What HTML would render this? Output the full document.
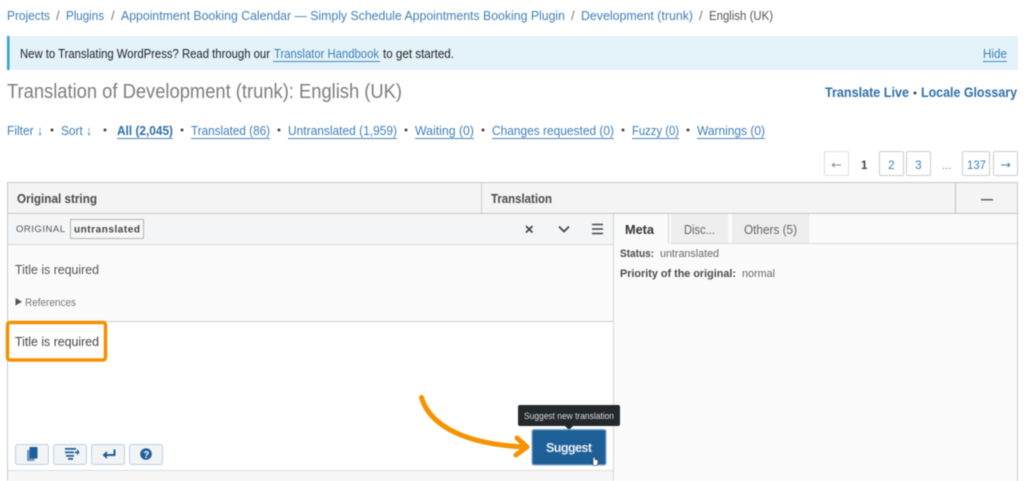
<!DOCTYPE html>
<html><head><meta charset="utf-8"><style>
html,body{margin:0;padding:0;background:#fff;width:1024px;height:481px;overflow:hidden}
svg{display:block;position:absolute;left:0;top:0;filter:blur(.4px)}
text{font-family:"Liberation Sans",sans-serif;font-size:13px;fill:#3c3c3c}
.l{fill:#3f7fb8}
.u{stroke:#4a86bb;stroke-width:1}
.b{font-weight:bold}
.btn{fill:#fff;stroke:#dfe1e3;stroke-width:1}
.btn2{fill:#fff;stroke:#c9cdd1;stroke-width:1}
.t{fill:#f1f3f5;stroke:#bcd3e6;stroke-width:1}
</style></head><body>
<svg width="1024" height="481" viewBox="0 0 1024 481" xmlns="http://www.w3.org/2000/svg">
<rect width="1024" height="481" fill="#fff"/>
<text class="l" x="7" y="20" textLength="43" lengthAdjust="spacingAndGlyphs">Projects</text>
<text x="56" y="20" style="fill:#777">/</text>
<text class="l" x="66" y="20" textLength="38" lengthAdjust="spacingAndGlyphs">Plugins</text>
<text x="111" y="20" style="fill:#777">/</text>
<text class="l" x="121" y="20" textLength="444" lengthAdjust="spacingAndGlyphs">Appointment Booking Calendar — Simply Schedule Appointments Booking Plugin</text>
<text x="571" y="20" style="fill:#777">/</text>
<text class="l" x="581" y="20" textLength="112" lengthAdjust="spacingAndGlyphs">Development (trunk)</text>
<text x="699" y="20" style="fill:#777">/</text>
<text x="709" y="20" textLength="64" lengthAdjust="spacingAndGlyphs" style="fill:#555">English (UK)</text>

<rect x="7" y="36" width="1011" height="34" fill="#e3f3f9"/>
<rect x="7" y="36" width="2.5" height="34" fill="#2ea2cc"/>
<text x="20" y="58" textLength="250" lengthAdjust="spacingAndGlyphs" style="fill:#222">New to Translating WordPress? Read through our</text>
<text class="l" x="274" y="58" textLength="105" lengthAdjust="spacingAndGlyphs">Translator Handbook</text>
<line class="u" x1="273" x2="380" y1="61.5" y2="61.5"/>
<text x="383" y="58" textLength="71" lengthAdjust="spacingAndGlyphs" style="fill:#222">to get started.</text>
<text class="l" x="983" y="58" textLength="24" lengthAdjust="spacingAndGlyphs">Hide</text>
<line class="u" x1="983" x2="1007" y1="61.5" y2="61.5"/>

<text x="7" y="98" textLength="395" lengthAdjust="spacingAndGlyphs" style="font-size:20.5px;fill:#7d7d7d">Translation of Development (trunk): English (UK)</text>
<text class="b" x="825" y="97" textLength="84" lengthAdjust="spacingAndGlyphs" style="font-size:14px;fill:#2f6fa8">Translate Live</text>
<circle cx="915" cy="93" r="1.5" fill="#444"/>
<text class="b" x="921" y="97" textLength="96" lengthAdjust="spacingAndGlyphs" style="font-size:14px;fill:#2f6fa8">Locale Glossary</text>

<text class="l" x="7" y="135" textLength="36" lengthAdjust="spacingAndGlyphs">Filter ↓</text>
<text class="l" x="61" y="135" textLength="31" lengthAdjust="spacingAndGlyphs">Sort ↓</text>
<text class="b" x="117" y="135" textLength="56" lengthAdjust="spacingAndGlyphs" style="fill:#2f6fa8">All (2,045)</text>
<line class="u" x1="117" x2="173" y1="138.500" y2="138.500"/>
<text class="l" x="191" y="135" textLength="79" lengthAdjust="spacingAndGlyphs">Translated (86)</text>
<line class="u" x1="191" x2="270" y1="138.500" y2="138.500"/>
<text class="l" x="288" y="135" textLength="109" lengthAdjust="spacingAndGlyphs">Untranslated (1,959)</text>
<line class="u" x1="288" x2="397" y1="138.500" y2="138.500"/>
<text class="l" x="415" y="135" textLength="59" lengthAdjust="spacingAndGlyphs">Waiting (0)</text>
<line class="u" x1="415" x2="474" y1="138.500" y2="138.500"/>
<text class="l" x="492" y="135" textLength="122" lengthAdjust="spacingAndGlyphs">Changes requested (0)</text>
<line class="u" x1="492" x2="614" y1="138.500" y2="138.500"/>
<text class="l" x="632" y="135" textLength="47" lengthAdjust="spacingAndGlyphs">Fuzzy (0)</text>
<line class="u" x1="632" x2="679" y1="138.500" y2="138.500"/>
<text class="l" x="697" y="135" textLength="68" lengthAdjust="spacingAndGlyphs">Warnings (0)</text>
<line class="u" x1="697" x2="765" y1="138.500" y2="138.500"/>
<g fill="#444"><circle cx="52" cy="130" r="1.500"/><circle cx="105" cy="130" r="1.500"/><circle cx="182" cy="130" r="1.500"/><circle cx="279" cy="130" r="1.500"/><circle cx="406" cy="130" r="1.500"/><circle cx="483" cy="130" r="1.500"/><circle cx="623" cy="130" r="1.500"/><circle cx="688" cy="130" r="1.500"/></g>

<rect class="btn" x="824.500" y="151.500" width="24" height="24" rx="1.500"/>
<rect class="btn2" x="879.500" y="151.500" width="24" height="24" rx="1.500"/>
<rect class="btn2" x="906.500" y="151.500" width="24" height="24" rx="1.500"/>
<rect class="btn2" x="962.500" y="151.500" width="27" height="24" rx="1.500"/>
<rect class="btn2" x="993.500" y="151.500" width="24" height="24" rx="1.500"/>
<path d="M832 165h9M832 165l2.500-2M832 165l2.500 2" stroke="#888" stroke-width="1" fill="none"/>
<text class="b" x="861" y="169" style="font-size:11.500px;fill:#444">1</text>
<text class="l" x="888" y="169" style="font-size:12px">2</text>
<text class="l" x="915" y="169" style="font-size:12px">3</text>
<text x="942" y="169" style="font-size:11px;fill:#777">...</text>
<text class="l" x="967" y="169" textLength="19" lengthAdjust="spacingAndGlyphs" style="font-size:12px">137</text>
<path d="M1001 165h9M1010 165l-2.500-2M1010 165l-2.500 2" stroke="#3f7fb8" stroke-width="1" fill="none"/>

<rect x="7.500" y="182.500" width="1010" height="31" fill="#f4f4f4" stroke="#c8c8c8"/>
<line x1="481.500" x2="481.500" y1="183" y2="213" stroke="#d0d0d0"/>
<line x1="955.500" x2="955.500" y1="183" y2="213" stroke="#d0d0d0" stroke-width="1.500"/>
<text class="b" x="17" y="203" textLength="80" lengthAdjust="spacingAndGlyphs" style="font-size:12.500px;fill:#4a4a4a">Original string</text>
<text class="b" x="491" y="203" textLength="61" lengthAdjust="spacingAndGlyphs" style="font-size:12.500px;fill:#4a4a4a">Translation</text>
<rect x="981" y="199" width="12" height="1.400" fill="#555"/>

<rect x="614" y="214" width="404" height="267" fill="#fbfbfb"/>
<rect x="8" y="214" width="605" height="30" fill="#f3f5f6"/>
<rect x="8" y="244" width="605" height="77" fill="#fbfbfb"/>
<rect x="8" y="322" width="605" height="148" fill="#fff"/>
<rect x="8" y="471" width="605" height="10" fill="#f7f7f7"/>
<line x1="8" x2="1018" y1="213.500" y2="213.500" stroke="#c4c4c4"/>
<line x1="8" x2="613" y1="244.500" y2="244.500" stroke="#d8d8d8"/>
<line x1="671" x2="1017" y1="243.500" y2="243.500" stroke="#d8d8d8"/>
<line x1="8" x2="613" y1="321.500" y2="321.500" stroke="#cfcfcf"/>
<line x1="8" x2="613" y1="470.500" y2="470.500" stroke="#dcdcdc"/>
<line x1="7.500" x2="7.500" y1="214" y2="481" stroke="#ccc"/>
<line x1="613.500" x2="613.500" y1="214" y2="481" stroke="#d4d4d4"/>
<line x1="1017.500" x2="1017.500" y1="214" y2="481" stroke="#ccc"/>

<text x="16" y="232" textLength="49" lengthAdjust="spacing" style="font-size:9.500px;fill:#555">ORIGINAL</text>
<rect x="70.500" y="219.500" width="73" height="19" fill="#f7f7f7" stroke="#b5b5b5"/>
<text class="b" x="74" y="232.500" textLength="66" lengthAdjust="spacing" style="font-size:10px;fill:#444">untranslated</text>
<path d="M526 226l6.500 6.500M532.500 226l-6.500 6.500" stroke="#444" stroke-width="1.700" fill="none"/>
<path d="M559 226.500l5 5 5-5" stroke="#444" stroke-width="1.700" fill="none"/>
<path d="M592 224.500h11M592 229h11M592 233.500h11" stroke="#444" stroke-width="1.500" fill="none"/>

<rect x="671" y="214" width="57" height="29" fill="#eee"/>
<rect x="732" y="214" width="77" height="29" fill="#eee"/>
<text class="b" x="625" y="234" textLength="29" lengthAdjust="spacingAndGlyphs" style="fill:#333">Meta</text>
<text x="684" y="234" textLength="31" lengthAdjust="spacingAndGlyphs" style="fill:#666">Disc...</text>
<text x="744" y="234" textLength="53" lengthAdjust="spacingAndGlyphs" style="fill:#666">Others (5)</text>
<line x1="668.500" x2="668.500" y1="214" y2="244" stroke="#d8d8d8"/>
<text class="b" x="620" y="257" textLength="34" lengthAdjust="spacingAndGlyphs" style="font-size:11px;fill:#4a4a4a">Status:</text>
<text x="660" y="257" textLength="59" lengthAdjust="spacingAndGlyphs" style="font-size:11px;fill:#666">untranslated</text>
<text class="b" x="620" y="277" textLength="116" lengthAdjust="spacingAndGlyphs" style="font-size:11px;fill:#4a4a4a">Priority of the original:</text>
<text x="742" y="277" textLength="33" lengthAdjust="spacingAndGlyphs" style="font-size:11px;fill:#666">normal</text>

<text x="15" y="274" textLength="84" lengthAdjust="spacingAndGlyphs" style="fill:#555">Title is required</text>
<path d="M15.500 298v7.500l6.500-3.750z" fill="#555"/>
<text x="25" y="306" textLength="51" lengthAdjust="spacingAndGlyphs" style="font-size:11px;fill:#777">References</text>
<text x="15" y="346" textLength="84" lengthAdjust="spacingAndGlyphs" style="fill:#444">Title is required</text>
<rect x="7.500" y="322.500" width="98" height="37.500" rx="2.500" fill="none" stroke="#f58f00" stroke-width="3.500"/>

<rect class="t" x="15.500" y="444.500" width="33" height="20" rx="2"/>
<rect class="t" x="53.500" y="444.500" width="33" height="20" rx="2"/>
<rect class="t" x="91.500" y="444.500" width="33" height="20" rx="2"/>
<rect class="t" x="129.500" y="444.500" width="33" height="20" rx="2"/>
<path d="M27 450h2.500v8.500h5v2.500H27z" fill="#6f9cc4"/><rect x="29.500" y="447" width="8" height="11.500" rx=".5" fill="#1f5f99"/>
<path d="M65 448h11v1.800H65zM65 451.500h9v1.800h-9zM66 455h8v1.800h-8zM68 458h5v1.800h-5z" fill="#1f5f99"/><path d="M75 451.500h2V449l2.500 3.300-2.500 3.200v-2.200h-2z" fill="#1f5f99"/>
<path d="M114.500 449.500v5.500h-10" stroke="#1f5f99" stroke-width="2" fill="none"/><path d="M107 451l-4.500 4 4.500 4z" fill="#1f5f99"/>
<circle cx="146" cy="454" r="5.800" fill="#1f5f99"/>
<text class="b" x="143.300" y="457.800" style="font-size:10px;fill:#fff">?</text>

<rect x="518" y="405" width="102" height="21" rx="2" fill="#23282d"/>
<path d="M565 426h8l-4 4z" fill="#23282d"/>
<text x="524" y="419" textLength="90" lengthAdjust="spacingAndGlyphs" style="font-size:9px;fill:#ddd">Suggest new translation</text>
<rect x="532" y="429.500" width="74" height="35.500" rx="2" fill="#1d5f97" stroke="#8db0d0" stroke-width="1.200"/>
<text class="b" x="546" y="452" textLength="46" lengthAdjust="spacing" style="font-size:12.500px;fill:#e8eef4">Suggest</text>
<path d="M593 457.500v5.500l-1-1 1.500 3.500h3.500l1-3v-2.500l-3-.5v-2.500z" fill="#fff" stroke="#333" stroke-width=".6"/>

<path d="M421.500 397.500C428 420 455 444 526 447" fill="none" stroke="#f59300" stroke-width="5" stroke-linecap="round"/>
<path d="M517 438l10 9-11 8" fill="none" stroke="#f59300" stroke-width="5" stroke-linecap="round" stroke-linejoin="round"/>
</svg>
</body></html>
